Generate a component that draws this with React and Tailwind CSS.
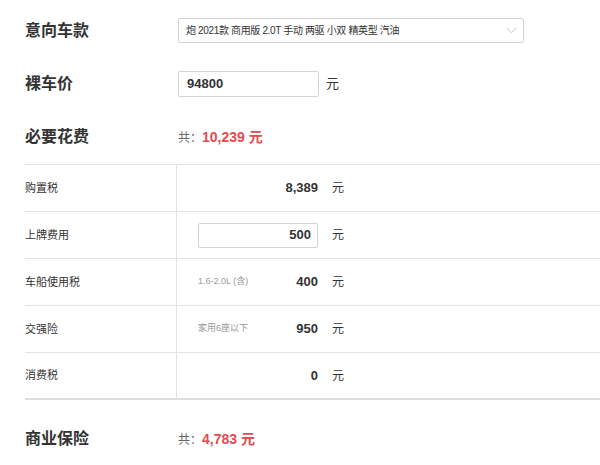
import React from 'react';

const font = { fontFamily: '"Liberation Sans", "Noto Sans CJK SC", sans-serif' };

const fees = [
  { label: '购置税', value: '8,389' },
  { label: '上牌费用', value: '500', input: true },
  { label: '车船使用税', value: '400', note: '1.6-2.0L (含)' },
  { label: '交强险', value: '950', note: '家用6座以下' },
  { label: '消费税', value: '0' },
];

const Total = ({ amount }) => (
  <div className="flex items-baseline">
    <span className="text-[12px] text-[#666]">共：</span>
    <span className="text-[14px] font-bold text-[#e64a50]">{amount} 元</span>
  </div>
);

const App = () => {
  return (
    <div className="w-[600px] h-[465px] overflow-hidden bg-white pl-[25px] pt-[18px] text-[#333]" style={font}>
      {/* 意向车款 */}
      <div className="flex items-center h-[25px]">
        <div className="w-[153px] text-[16px] font-bold">意向车款</div>
        <div className="w-[346px] h-[25px] border border-[#d4d4d4] rounded-[2px] flex items-center justify-between pl-[7px] pr-[6px]">
          <span className="text-[10px] tracking-[-0.35px]">炮 2021款 商用版 2.0T 手动 两驱 小双 精英型 汽油</span>
          <svg width="11" height="7" viewBox="0 0 11 7" fill="none">
            <path d="M0.5 0.8 L5.5 5.8 L10.5 0.8" stroke="#c4c4c4" strokeWidth="1" />
          </svg>
        </div>
      </div>

      {/* 裸车价 */}
      <div className="flex items-center h-[26px] mt-[28px]">
        <div className="w-[153px] text-[16px] font-bold">裸车价</div>
        <div className="w-[141px] h-[26px] border border-[#d4d4d4] rounded-[2px] flex items-center pl-[8px] text-[13px] font-bold">
          94800
        </div>
        <span className="ml-[7px] text-[13px]">元</span>
      </div>

      {/* 必要花费 */}
      <div className="flex items-center h-[26px] mt-[27px]">
        <div className="w-[153px] text-[16px] font-bold">必要花费</div>
        <Total amount="10,239" />
      </div>

      {/* Fee table */}
      <div className="mt-[14px] border-t border-[#e3e3e3]">
        {fees.map((f, i) => (
          <div
            key={f.label}
            className={`flex h-[47px] ${i === fees.length - 1 ? 'border-b-2 border-[#dedede]' : 'border-b border-[#e3e3e3]'}`}
          >
            <div className="w-[152px] border-r border-[#e3e3e3] flex items-center text-[11px]">{f.label}</div>
            <div className="flex items-center pl-[21px]">
              {f.input ? (
                <div className="w-[120px] h-[25px] border border-[#d4d4d4] rounded-[2px] flex items-center justify-end pr-[6px] text-[13px] font-bold">
                  {f.value}
                </div>
              ) : (
                <div className="w-[120px] flex items-center justify-between">
                  <span className="text-[9px] text-[#999]">{f.note}</span>
                  <span className="text-[13px] font-bold">{f.value}</span>
                </div>
              )}
              <span className="ml-[14px] text-[12px]">元</span>
            </div>
          </div>
        ))}
      </div>

      {/* 商业保险 */}
      <div className="flex items-center h-[26px] mt-[26px]">
        <div className="w-[153px] text-[16px] font-bold">商业保险</div>
        <Total amount="4,783" />
      </div>
    </div>
  );
};

export default App;
